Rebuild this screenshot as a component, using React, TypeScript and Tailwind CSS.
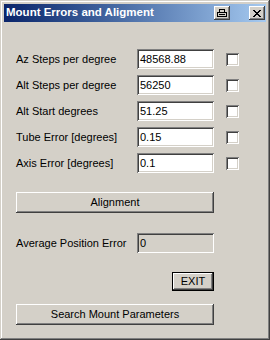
import React from "react";

const raised =
  "shadow-[inset_-1px_-1px_0_#404040,inset_1px_1px_0_#ffffff,inset_-2px_-2px_0_#808080,inset_2px_2px_0_#d4d0c8]";
const sunken =
  "shadow-[inset_1px_1px_0_#808080,inset_-1px_-1px_0_#ffffff,inset_2px_2px_0_#404040,inset_-2px_-2px_0_#d4d0c8]";

function Field({ value, disabled }: { value: string; disabled?: boolean }) {
  return (
    <div
      className={`w-[77px] h-[20px] flex items-center pl-[3px] text-[11px] text-black ${sunken} ${
        disabled ? "bg-[#d4d0c8]" : "bg-white"
      }`}
    >
      {value}
    </div>
  );
}

function Check() {
  return <div className={`w-[13px] h-[13px] bg-white ${sunken}`} />;
}

function Row({ label, value }: { label: string; value: string }) {
  return (
    <div className="flex items-center h-[20px]">
      <div className="w-[121px] text-[11px] text-black whitespace-nowrap">{label}</div>
      <Field value={value} />
      <div className="ml-[12px]">
        <Check />
      </div>
    </div>
  );
}

export default function App() {
  return (
    <div
      className="w-[270px] h-[340px] bg-[#d4d0c8] shadow-[inset_-1px_-1px_0_#404040,inset_1px_1px_0_#d4d0c8,inset_-2px_-2px_0_#808080,inset_2px_2px_0_#ffffff] p-[4px] flex flex-col"
      style={{ fontFamily: '"Liberation Sans", Arial, sans-serif' }}
    >
      {/* Title bar */}
      <div className="h-[18px] flex items-center bg-gradient-to-r from-[#0a246a] to-[#a6caf0] pl-[2px] pr-[1px]">
        <div className="text-white font-bold text-[11.5px] leading-none flex-1 whitespace-nowrap">
          Mount Errors and Aligment
        </div>
        <div className={`w-[16px] h-[14px] bg-[#d4d0c8] ${raised} flex items-center justify-center`}>
          <svg width="10" height="8" viewBox="0 0 10 8" shapeRendering="crispEdges">
            <rect x="2" y="0" width="6" height="1" fill="#000" />
            <rect x="2" y="0" width="1" height="3" fill="#000" />
            <rect x="7" y="0" width="1" height="3" fill="#000" />
            <rect x="0" y="3" width="10" height="1" fill="#000" />
            <rect x="0" y="3" width="1" height="5" fill="#000" />
            <rect x="9" y="3" width="1" height="5" fill="#000" />
            <rect x="0" y="7" width="10" height="1" fill="#000" />
            <rect x="2" y="5" width="6" height="1" fill="#000" />
          </svg>
        </div>
        <div className="w-[19px]" />
        <div className={`w-[16px] h-[14px] bg-[#d4d0c8] ${raised} flex items-center justify-center`}>
          <svg width="8" height="7" viewBox="0 0 8 7" shapeRendering="crispEdges">
            <path d="M0 0h2v1h-2zM6 0h2v1h-2zM1 1h2v1h-2zM5 1h2v1h-2zM2 2h4v1h-4zM3 3h2v1h-2zM2 4h4v1h-4zM1 5h2v1h-2zM5 5h2v1h-2zM0 6h2v1h-2zM6 6h2v1h-2z" fill="#000" />
          </svg>
        </div>
      </div>

      {/* Content */}
      <div className="flex flex-col pl-[12px] pt-[27px]">
        <div className="flex flex-col gap-[6px]">
          <Row label="Az Steps per degree" value="48568.88" />
          <Row label="Alt Steps per degree" value="56250" />
          <Row label="Alt Start degrees" value="51.25" />
          <Row label="Tube Error [degrees]" value="0.15" />
          <Row label="Axis Error [degrees]" value="0.1" />
        </div>

        <div
          className={`mt-[19px] w-[198px] h-[21px] flex items-center justify-center text-[11px] text-black bg-[#d4d0c8] ${raised}`}
        >
          Alignment
        </div>

        <div className="mt-[20px] flex items-center h-[20px]">
          <div className="w-[121px] text-[11px] text-black whitespace-nowrap">Average Position Error</div>
          <Field value="0" disabled />
        </div>

        <div className="mt-[19px] w-[198px] flex justify-end">
          <div className="w-[42px] h-[19px] border border-black bg-[#d4d0c8]">
            <div
              className={`w-full h-full flex items-center justify-center text-[11px] text-black ${raised}`}
            >
              EXIT
            </div>
          </div>
        </div>

        <div
          className={`mt-[13px] w-[198px] h-[21px] flex items-center justify-center text-[11px] text-black bg-[#d4d0c8] ${raised}`}
        >
          Search Mount Parameters
        </div>
      </div>
    </div>
  );
}
